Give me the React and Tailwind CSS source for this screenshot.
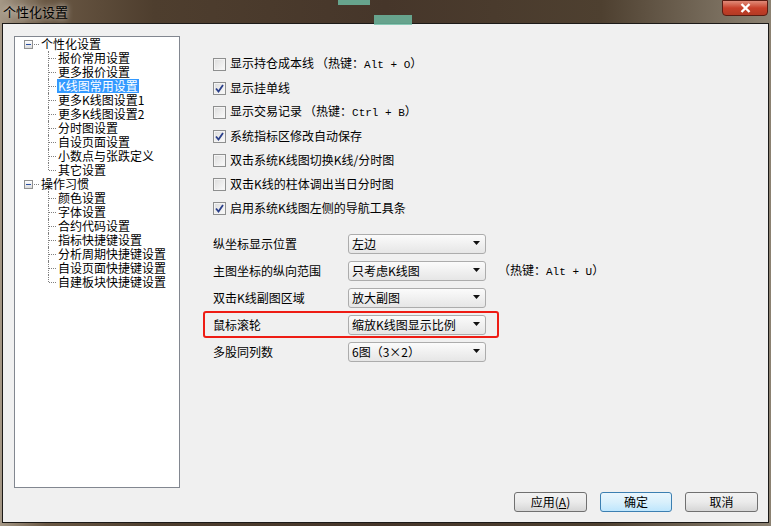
import React from "react";

const font = "font-['Noto_Sans_CJK_SC',sans-serif]";

const tree = [
  {
    label: "个性化设置",
    children: [
      "报价常用设置",
      "更多报价设置",
      "K线图常用设置",
      "更多K线图设置1",
      "更多K线图设置2",
      "分时图设置",
      "自设页面设置",
      "小数点与张跌定义",
      "其它设置",
    ],
  },
  {
    label: "操作习惯",
    children: [
      "颜色设置",
      "字体设置",
      "合约代码设置",
      "指标快捷键设置",
      "分析周期快捷键设置",
      "自设页面快捷键设置",
      "自建板块快捷键设置",
    ],
  },
];

const checks = [
  { text: "显示持仓成本线", hot: "Alt + O", on: false },
  { text: "显示挂单线", on: true },
  { text: "显示交易记录", hot: "Ctrl + B", on: false },
  { text: "系统指标区修改自动保存", on: true },
  { text: "双击系统K线图切换K线/分时图", on: false },
  { text: "双击K线的柱体调出当日分时图", on: false },
  { text: "启用系统K线图左侧的导航工具条", on: true },
];

const selects = [
  { label: "纵坐标显示位置", value: "左边" },
  { label: "主图坐标的纵向范围", value: "只考虑K线图", hot: "Alt + U" },
  { label: "双击K线副图区域", value: "放大副图" },
  { label: "鼠标滚轮", value: "缩放K线图显示比例", mark: true },
  { label: "多股同列数", value: "6图（3×2）" },
];

function Hotkey({ keys }) {
  return (
    <span className="ml-[2px]">
      （热键：
      <span className="font-['Liberation_Mono',monospace] text-[11px]">{keys}</span>）
    </span>
  );
}

function Checkbox({ on }) {
  return (
    <span className="w-[13px] h-[13px] border border-[#8e8f8f] bg-gradient-to-br from-[#dcdcdc] to-[#fbfbfb] flex items-center justify-center shrink-0">
      <span className="w-[11px] h-[11px] border border-[#f4f4f4] flex items-center justify-center">
        {on && (
          <svg width="9" height="9" viewBox="0 0 9 9">
            <path d="M1 4.5 L3.5 7.5 L8 1" fill="none" stroke="#2a3f8a" strokeWidth="1.8" />
          </svg>
        )}
      </span>
    </span>
  );
}

function Select({ value }) {
  return (
    <div className="w-[138px] h-[20px] border border-[#acacac] rounded-[3px] bg-gradient-to-b from-[#fbfbfb] to-[#e6e6e6] flex items-center pl-[3px] pr-[4px]">
      <span className="flex-1 whitespace-nowrap">{value}</span>
      <svg width="8" height="5" viewBox="0 0 8 5">
        <path d="M0 0 H7 L3.5 4 Z" fill="#111" />
      </svg>
    </div>
  );
}

function Button({ children, focus }) {
  return (
    <button
      className={
        "h-[20px] rounded-[3px] border flex items-center justify-center text-black " +
        (focus
          ? "w-[72px] border-[#3c7fb1] bg-gradient-to-b from-[#eaf6fd] via-[#d9f0fc] to-[#bee6fd]"
          : "w-[73px] border-[#707070] bg-gradient-to-b from-[#f2f2f2] via-[#ebebeb] to-[#d6d6d6]")
      }
    >
      {children}
    </button>
  );
}

export default function App() {
  return (
    <div
      className={
        "relative w-[771px] h-[526px] overflow-hidden flex flex-col text-[12px] leading-[14px] text-black bg-[linear-gradient(90deg,#a59886_0%,#6a5844_6%,#4e3e2e_20%,#46362a_50%,#4e4030_78%,#8c8272_100%)] " +
        font
      }
    >
      {/* wallpaper showing through the glass */}
      <div className="absolute left-[338px] top-0 w-[32px] h-[5px] bg-[#6fbfa6] opacity-80" />
      <div className="absolute left-[374px] top-[15px] w-[38px] h-[10px] bg-[#6fbfa6] opacity-80" />

      {/* title bar */}
      <div className="relative h-[23px] flex items-start shrink-0">
        <span className="ml-[3px] mt-[4px] text-[13px] leading-[15px] text-black [text-shadow:0_0_6px_rgba(255,255,255,0.9)]">
          个性化设置
        </span>
        <div className="ml-auto mr-[3px] w-[46px] h-[16px] rounded-b-[4px] border border-[#5a1c12] bg-gradient-to-b from-[#e08a78] via-[#c8402a] to-[#b33a24] flex items-center justify-center">
          <svg width="11" height="10" viewBox="0 0 11 10">
            <path d="M1.5 1 L9.5 9 M9.5 1 L1.5 9" stroke="#fff" strokeWidth="2.4" />
          </svg>
        </div>
      </div>

      {/* client area */}
      <div className="mx-[2px] h-[500px] border border-[#1c1a18] bg-[#f0f0f0] flex">
        {/* tree */}
        <div className="ml-[11px] mt-[12px] w-[166px] h-[452px] border border-[#828790] bg-white shrink-0">
          {tree.map((g) => (
            <div key={g.label}>
              <div className="h-[14px] flex items-center">
                <span className="ml-[9px] w-[9px] h-[9px] border border-[#919191] bg-gradient-to-b from-white to-[#dcdcdc] flex items-center justify-center">
                  <span className="w-[5px] h-[1px] bg-[#2b4fa0]" />
                </span>
                <span className="w-[5px] border-t border-dotted border-[#808080] ml-[1px]" />
                <span className="ml-[1px] px-[1px] h-[14px] leading-[14px]">{g.label}</span>
              </div>
              {g.children.map((c, i) => {
                const last = i === g.children.length - 1;
                const sel = c === "K线图常用设置";
                return (
                  <div key={c} className="h-[14px] flex items-center">
                    <span className="relative w-[42px] h-full shrink-0">
                      <span
                        className={
                          "absolute left-[33px] top-0 border-l border-dotted border-[#808080] " +
                          (last ? "h-[7px]" : "h-full")
                        }
                      />
                      <span className="absolute left-[34px] top-[7px] w-[7px] border-t border-dotted border-[#808080]" />
                    </span>
                    <span
                      className={
                        "px-[1px] h-[14px] leading-[14px] whitespace-nowrap " +
                        (sel ? "bg-[#3399ff] text-white" : "")
                      }
                    >
                      {c}
                    </span>
                  </div>
                );
              })}
            </div>
          ))}
        </div>

        {/* settings */}
        <div className="flex-1 flex flex-col pt-[28px] pr-[10px] pb-[10px]">
          <div className="ml-[33px] flex flex-col">
            {checks.map((c) => (
              <div key={c.text} className="h-[24px] flex items-center gap-[4px]">
                <Checkbox on={c.on} />
                <span className="whitespace-nowrap">
                  {c.text}
                  {c.hot && <Hotkey keys={c.hot} />}
                </span>
              </div>
            ))}
          </div>

          <div className="ml-[33px] mt-[10px] flex flex-col">
            {selects.map((s) =>
              s.mark ? (
                <div
                  key={s.label}
                  className="-ml-[10px] w-[296px] h-[27px] border-2 border-[#ee1c14] rounded-[3px] pl-[8px] flex items-center"
                >
                  <span className="w-[135px]">{s.label}</span>
                  <Select value={s.value} />
                </div>
              ) : (
                <div key={s.label} className="h-[27px] flex items-center">
                  <span className="w-[135px]">{s.label}</span>
                  <Select value={s.value} />
                  {s.hot && (
                    <span className="ml-[10px] whitespace-nowrap">
                      <Hotkey keys={s.hot} />
                    </span>
                  )}
                </div>
              )
            )}
          </div>

          <div className="mt-auto flex justify-end gap-[13px]">
            <Button>
              应用(<span className="underline">A</span>)
            </Button>
            <Button focus>确定</Button>
            <Button>取消</Button>
          </div>
        </div>
      </div>
    </div>
  );
}
